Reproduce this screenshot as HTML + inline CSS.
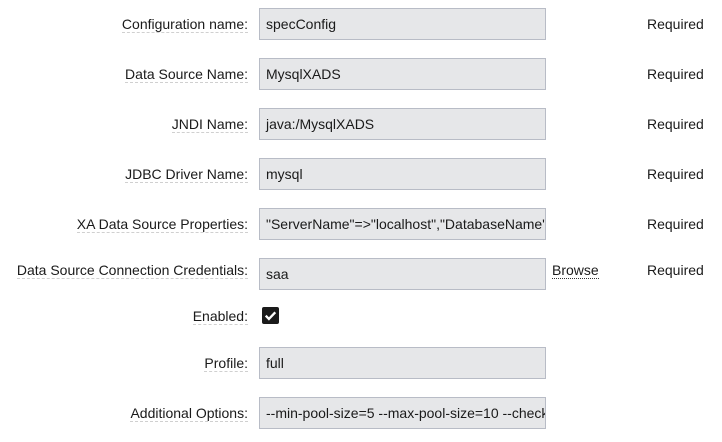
<!DOCTYPE html>
<html><head><meta charset="utf-8"><style>
body{margin:0;width:722px;height:442px;background:#fff;font-family:"Liberation Sans",Arial,sans-serif;font-size:14px;color:#1a1a1a;position:relative;overflow:hidden}
.l{position:absolute;right:474px;line-height:16px;border-bottom:1px dashed #d0d0d0;white-space:nowrap;margin-top:1px}
.i{position:absolute;left:259px;background:#e6e7e9;border:1px solid #b8bcc6;line-height:31px;padding-left:6px;box-sizing:border-box;width:287px;height:32px;white-space:nowrap;overflow:hidden}
.r{position:absolute;left:647px;line-height:16px;white-space:nowrap;margin-top:1px}
.b{position:absolute;left:552px;line-height:16px;border-bottom:1px dotted #333;margin-top:1px}
.cb{position:absolute;left:262px;top:307px;width:17px;height:17px;background:#1a1a1a;border-radius:2px}
</style></head><body>
<span class="l" style="top:15px">Configuration name:</span><div class="i" style="top:8px">specConfig</div><span class="r" style="top:15px">Required</span>
<span class="l" style="top:65px">Data Source Name:</span><div class="i" style="top:58px">MysqlXADS</div><span class="r" style="top:65px">Required</span>
<span class="l" style="top:115px">JNDI Name:</span><div class="i" style="top:108px">java:/MysqlXADS</div><span class="r" style="top:115px">Required</span>
<span class="l" style="top:165px">JDBC Driver Name:</span><div class="i" style="top:158px">mysql</div><span class="r" style="top:165px">Required</span>
<span class="l" style="top:215px">XA Data Source Properties:</span><div class="i" style="top:208px">"ServerName"=&gt;"localhost","DatabaseName"</div><span class="r" style="top:215px">Required</span>
<span class="l" style="top:261px">Data Source Connection Credentials:</span><div class="i" style="top:258px">saa</div><span class="b" style="top:261px">Browse</span><span class="r" style="top:261px">Required</span>
<span class="l" style="top:307px">Enabled:</span>
<div class="cb"><svg width="17" height="17" viewBox="0 0 16 16"><path d="M3.5 8.2l3 3 6-6.2" stroke="#fff" stroke-width="2.2" fill="none"/></svg></div>
<span class="l" style="top:354px">Profile:</span><div class="i" style="top:347px">full</div>
<span class="l" style="top:404px">Additional Options:</span><div class="i" style="top:397px">--min-pool-size=5 --max-pool-size=10 --check-valid-connection-sql</div>
</body></html>
